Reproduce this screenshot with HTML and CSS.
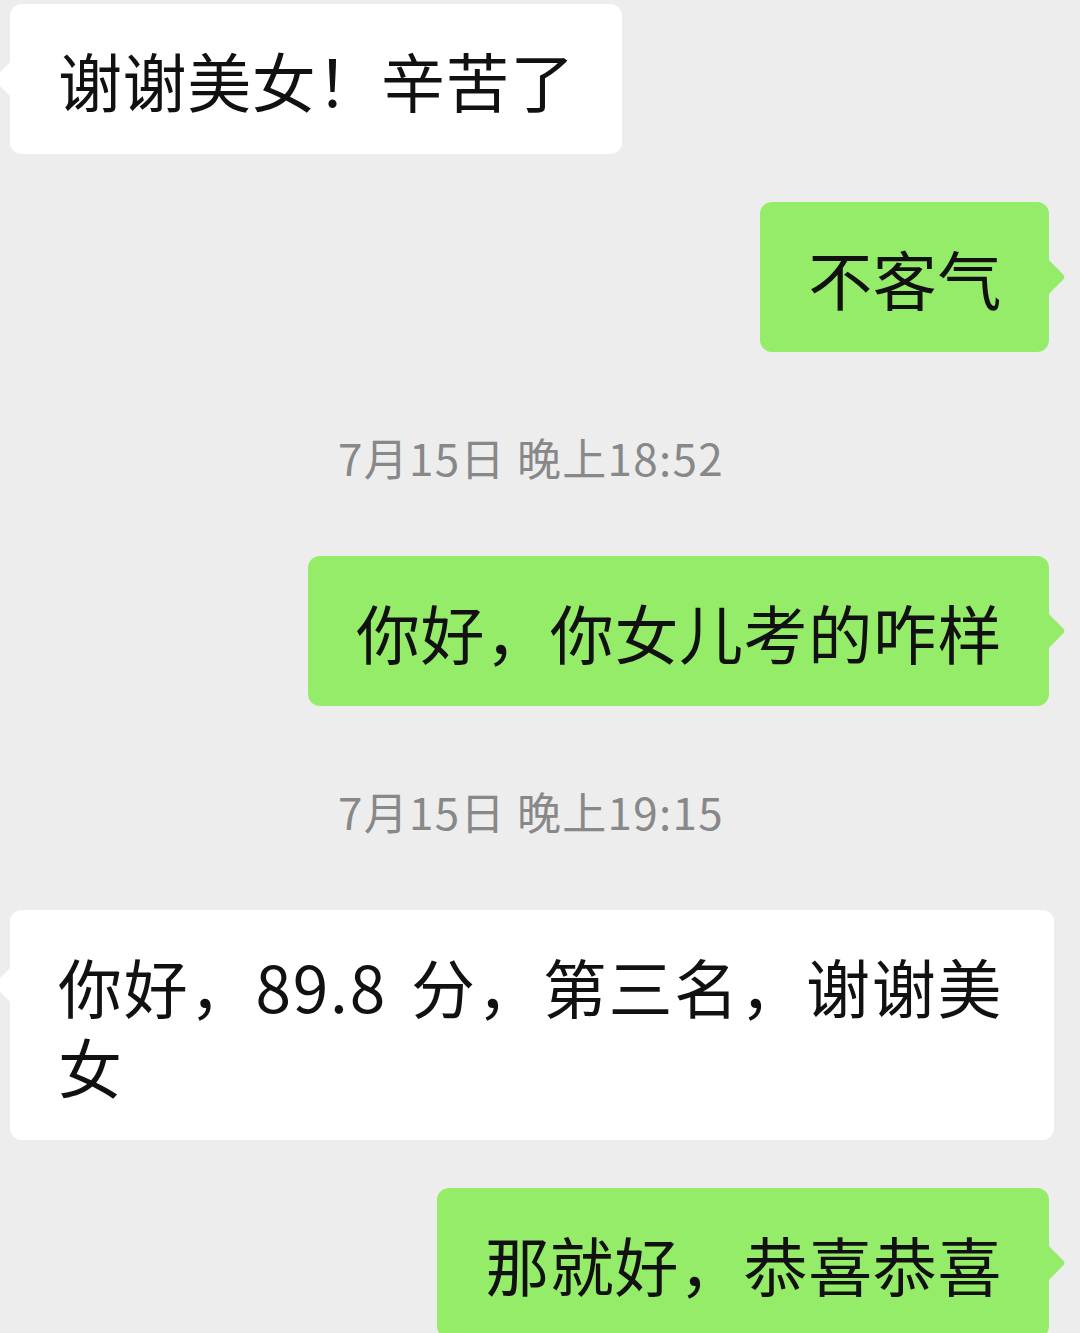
FILE: index.html
```html
<!DOCTYPE html>
<html lang="zh-CN">
<head>
  <meta charset="UTF-8">
  <meta name="viewport" content="width=device-width, initial-scale=1.0">
  <title>聊天记录</title>
  <link rel="stylesheet" href="styles.css">
</head>
<body>

  <div class="chat">
    <div class="row left">
      <div class="bubble white">谢谢美女！辛苦了</div>
    </div>

    <div class="row right">
      <div class="bubble green">不客气</div>
    </div>

    <div class="time">7月15日 晚上18:52</div>

    <div class="row right">
      <div class="bubble green">你好，你女儿考的咋样</div>
    </div>

    <div class="time">7月15日 晚上19:15</div>

    <div class="row left">
      <div class="bubble white wide">你好，89.8 分，第三名，谢谢美女</div>
    </div>

    <div class="row right">
      <div class="bubble green">那就好，恭喜恭喜</div>
    </div>
  </div>

</body>
</html>
```

FILE: styles.css
```css
body {
  margin: 0;
  padding: 0;
  background-color: #ededed;
  font-family: "Noto Sans CJK SC", "Noto Sans", sans-serif;
  overflow: hidden;
}
.chat {
  padding-top: 4px;
}
.row {
  display: flex;
  margin-bottom: 48px;
}
.row.left {
  justify-content: flex-start;
  padding-left: 10px;
}
.row.right {
  justify-content: flex-end;
  padding-right: 31px;
}
.bubble {
  position: relative;
  box-sizing: border-box;
  max-width: 1044px;
  padding: 35px 47px 35px 48px;
  border-radius: 12px;
  font-size: 64px;
  line-height: 80px;
  letter-spacing: 0.6px;
  color: #111;
}
.bubble.wide {
  letter-spacing: 1.8px;
  word-spacing: 8px;
}
.bubble::after {
  content: "";
  position: absolute;
  top: 61px;
  width: 28px;
  height: 28px;
  border-radius: 4px;
  transform: rotate(45deg);
}
.bubble.white {
  background-color: #fff;
}
.bubble.white::after {
  left: -11px;
  background-color: #fff;
}
.bubble.green {
  background-color: #95ec69;
}
.bubble.green::after {
  right: -11px;
  background-color: #95ec69;
}
.time {
  padding: 6px 18px 0 0;
  margin-bottom: 48px;
  text-align: center;
  font-size: 44px;
  letter-spacing: 1.3px;
  line-height: 102px;
  color: #888;
}
```
